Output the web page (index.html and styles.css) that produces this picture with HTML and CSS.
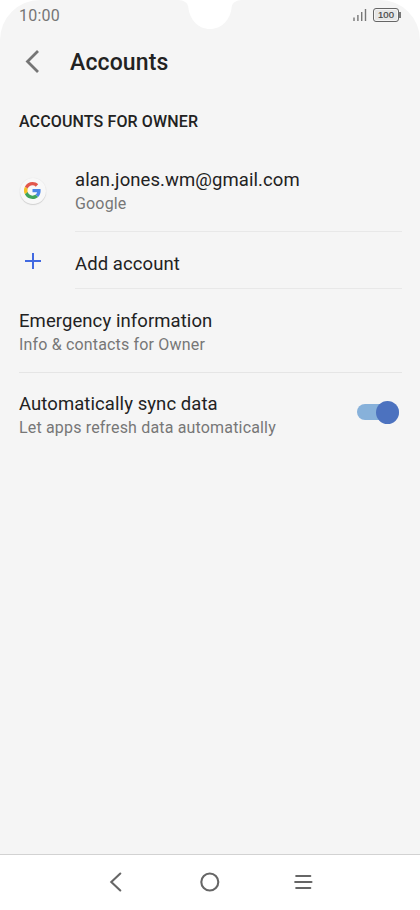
FILE: index.html
```html
<!DOCTYPE html>
<html lang="en">
<head>
<meta charset="utf-8">
<title>Accounts</title>
<link rel="stylesheet" href="styles.css">
</head>
<body>
<div class="phone">
  <div class="screen">
    <svg class="notch" width="60" height="29" viewBox="0 0 60 29" aria-hidden="true"><path d="M-2 0C4 .3 7.500 2.500 8.300 7C9.500 20 18.500 29 30 29S50.500 20 51.700 7C52.500 2.500 56 .3 62 0Z"/></svg>
    <header class="status">
      <span class="time">10:00</span>
      <span class="indicators">
        <svg class="signal" width="14" height="12" viewBox="0 0 14 12" aria-hidden="true"><path d="M1 8.500V12M4.900 6V12M8.700 3V12M12.500 0V12"/></svg>
        <span class="battery">100</span>
      </span>
    </header>
    <div class="titlebar">
      <svg class="back" width="16" height="24" viewBox="0 0 16 24" aria-hidden="true"><path d="M13 1L2.500 11.500L13 22"/></svg>
      <h1 class="title">Accounts</h1>
    </div>
    <h2 class="section">ACCOUNTS FOR OWNER</h2>
    <main class="list">
      <div class="row account">
        <div class="icon">
          <span class="google"><svg width="17" height="17" viewBox="0 0 48 48" aria-hidden="true">
            <path fill="#e2574c" d="M24 9.500c3.540 0 6.710 1.220 9.210 3.600l6.850-6.850C35.900 2.380 30.470 0 24 0 14.620 0 6.510 5.380 2.560 13.220l7.980 6.190C12.430 13.720 17.740 9.500 24 9.500z"/>
            <path fill="#4b86e8" d="M46.980 24.550c0-1.570-.15-3.090-.38-4.550H24v9.020h12.940c-.58 2.960-2.260 5.480-4.780 7.180l7.730 6c4.510-4.180 7.090-10.360 7.090-17.650z"/>
            <path fill="#f5c026" d="M10.530 28.590A14.500 14.500 0 0 1 10.530 19.410L2.560 13.220A24 24 0 0 0 2.560 34.780z"/>
            <path fill="#3fa45b" d="M24 48c6.480 0 11.930-2.130 15.890-5.810l-7.730-6c-2.150 1.450-4.920 2.300-8.160 2.300-6.260 0-11.570-4.220-13.470-9.910l-7.970 6.200C6.510 42.620 14.620 48 24 48z"/>
          </svg></span>
        </div>
        <div class="content"><div class="name">alan.jones.wm@gmail.com</div><div class="detail">Google</div></div>
      </div>
      <div class="row add">
        <div class="icon"><svg class="plus" width="18" height="18" viewBox="0 0 18 18" aria-hidden="true"><path d="M1 9H17M9 1V17"/></svg></div>
        <div class="content"><div class="name">Add account</div></div>
      </div>
      <div class="row emergency">
        <div class="content"><div class="name">Emergency information</div><div class="detail">Info &amp; contacts for Owner</div></div>
      </div>
      <div class="row sync">
        <div class="content"><div class="name">Automatically sync data</div><div class="detail">Let apps refresh data automatically</div></div>
        <div class="toggle"><span class="knob"></span></div>
      </div>
    </main>
  </div>
  <nav class="nav">
    <svg width="94" height="24" viewBox="0 0 94 24" aria-hidden="true"><path d="M51.300 3.500L42.300 12L51.300 20.500"/></svg>
    <svg width="94" height="24" viewBox="0 0 94 24" aria-hidden="true"><circle cx="46.800" cy="12" r="8.500"/></svg>
    <svg width="94" height="24" viewBox="0 0 94 24" aria-hidden="true"><path d="M39.200 6H53.300M38.200 12H54.500M39.200 18H53.300"/></svg>
  </nav>
</div>
</body>
</html>
```
FILE: styles.css
```css
* { box-sizing: border-box; }
body { margin: 0; background: #fff; font-family: Roboto, sans-serif; color: #222; }
.phone { display: flex; flex-direction: column; width: 420px; height: 910px; overflow: hidden; }
.screen { position: relative; height: 855px; background: #f5f5f5; border-bottom: 1px solid #d2d2d2; border-radius: 40px 40px 0 0; }
.notch { position: absolute; top: 0; left: 180px; fill: #fff; overflow: visible; }
.status { display: flex; justify-content: space-between; height: 30px; padding: 0 19px; }
.time { font-size: 16px; line-height: 32px; color: #757575; letter-spacing: .2px; }
.indicators { display: flex; align-items: center; gap: 6px; height: 30px; }
.signal { fill: none; stroke: #777; stroke-width: 1.400; }
.battery { position: relative; width: 26px; height: 14px; margin: -1px 2px 0 0; border: 1px solid #666; border-radius: 3px; background: #e6e6e6; box-shadow: inset 0 0 0 1px #f5f5f5; font-family: "Liberation Sans", sans-serif; font-size: 9.500px; line-height: 12px; -webkit-text-stroke: .2px #444; text-align: center; color: #444; }
.battery::after { content: ""; position: absolute; right: -3px; top: 3px; width: 2px; height: 6px; background: #777; }
.titlebar { display: flex; align-items: center; height: 64px; padding-left: 25px; }
.back { fill: none; stroke: #757575; stroke-width: 2.800; }
.title { margin: 2px 0 0 29px; font-size: 23px; line-height: 30px; font-weight: 500; letter-spacing: .13px; }
.section { margin: 0; padding-left: 19px; height: 55px; font-size: 16px; line-height: 55px; font-weight: 500; letter-spacing: .13px; }
.list { padding: 0 18px 0 19px; }
.row { display: flex; align-items: flex-start; }
.content { flex: 1; }
.name { font-size: 18.500px; line-height: 24px; letter-spacing: .08px; }
.detail { font-size: 16px; line-height: 24px; color: #777; letter-spacing: .17px; }
.icon { display: flex; align-items: center; justify-content: center; width: 27px; margin-right: 29px; }
.account, .emergency, .sync { height: 83px; }
.account .content { height: 83px; padding-top: 19px; border-bottom: 1px solid #e8e8e8; }
.account .icon { height: 83px; }
.google { display: flex; align-items: center; justify-content: center; width: 26px; height: 26px; border-radius: 50%; background: #f8f8f8; box-shadow: 0 1px 1px #d0d0d0, 0 0 1px #ddd; }
.add { height: 58px; }
.add .content { height: 57px; padding-top: 20px; border-bottom: 1px solid #e8e8e8; }
.add .icon { height: 57px; }
.plus { fill: none; stroke: #4169e1; stroke-width: 2; }
.emergency { padding-top: 19px; border-bottom: 1px solid #e5e5e5; }
.sync { padding-top: 19px; }
.toggle { display: flex; align-items: center; justify-content: flex-end; width: 42px; height: 16px; margin: 12px 3px 0 0; border-radius: 8px; background: #87b1da; }
.knob { flex: none; width: 23px; height: 23px; border-radius: 50%; background: #4c72bf; }
.nav { display: flex; align-items: center; justify-content: center; height: 55px; padding-bottom: 2px; background: #fff; }
.nav svg { fill: none; stroke: #666; stroke-width: 2.100; stroke-linecap: round; }
```
